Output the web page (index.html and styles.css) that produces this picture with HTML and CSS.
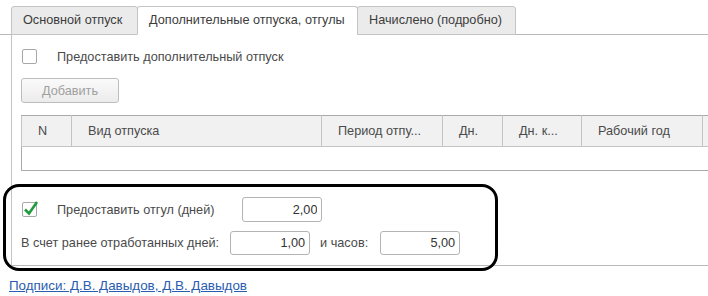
FILE: index.html
```html
<!DOCTYPE html>
<html lang="ru">
<head>
  <meta charset="UTF-8">
  <title>Отпуск</title>
  <link rel="stylesheet" href="styles.css">
</head>
<body>
  <div class="page">
    <!-- вкладки -->
    <div class="tabs">
      <div class="tab">Основной отпуск</div>
      <div class="tab active">Дополнительные отпуска, отгулы</div>
      <div class="tab">Начислено (подробно)</div>
    </div>

    <div class="panel">
      <label class="check-row">
        <span class="checkbox"></span>
        <span>Предоставить дополнительный отпуск</span>
      </label>

      <button class="btn" disabled>Добавить</button>

      <div class="grid">
        <table>
          <colgroup>
            <col style="width:50px">
            <col style="width:250px">
            <col style="width:121px">
            <col style="width:60px">
            <col style="width:79px">
            <col style="width:121px">
            <col style="width:80px">
          </colgroup>
          <thead>
            <tr>
              <th>N</th>
              <th>Вид отпуска</th>
              <th>Период отпу...</th>
              <th>Дн.</th>
              <th>Дн. к...</th>
              <th>Рабочий год</th>
              <th></th>
            </tr>
          </thead>
          <tbody>
            <tr><td colspan="7"></td></tr>
          </tbody>
        </table>
      </div>

      <div class="check-row days">
        <span class="checkbox checked">
          <svg width="18" height="18" viewBox="0 0 18 18">
            <path d="M3 9.5 L7 13.5 L15 2" fill="none" stroke="#1f9b3f" stroke-width="2.6"/>
          </svg>
        </span>
        <span>Предоставить отгул (дней)</span>
        <input class="num first" type="text" value="2,00" readonly>
      </div>

      <div class="field-row">
        <span>В счет ранее отработанных дней:</span>
        <input class="num" type="text" value="1,00" readonly>
        <span class="hours">и часов:</span>
        <input class="num" type="text" value="5,00" readonly>
      </div>
    </div>

    <a class="signs" href="#">Подписи: Д.В. Давыдов, Д.В. Давыдов</a>

    <!-- выделение рамкой -->
    <div class="mark"></div>
  </div>
</body>
</html>
```

FILE: styles.css
```css
/* базовые */
html, body {
  margin: 0;
  padding: 0;
  background: #ffffff;
  color: #4a4a4a;
  font-family: "Liberation Sans", Arial, sans-serif;
  font-size: 12.7px;
}
*, *::before, *::after {
  box-sizing: border-box;
}
.page {
  position: relative;
  width: 708px;
  height: 296px;
  overflow: hidden;
}
/* вкладки */
.tabs {
  display: flex;
  align-items: flex-end;
  padding: 6px 0 0 11px;
  height: 35px;
  border-bottom: 1px solid #b9b9b9;
}
.tab {
  height: 29px;
  margin-bottom: -1px;
  padding: 0 11px;
  line-height: 27px;
  white-space: nowrap;
  background: #ebebeb;
  border: 1px solid #c4c4c4;
  border-radius: 3px 3px 0 0;
  color: #3c3c3c;
}
.tab:first-child {
  width: 127px;
}
.tab.active {
  width: 221px;
  margin-left: -1px;
  background: #ffffff;
  border-bottom-color: #ffffff;
}
.tab:last-child {
  width: 159px;
  margin-left: -1px;
}
/* панель */
.panel {
  margin-left: 11px;
  height: 231px;
  border-left: 1px solid #c4c4c4;
  border-bottom: 1px solid #b9b9b9;
  padding: 14px 0 0 9px;
  display: flex;
  flex-direction: column;
  align-items: flex-start;
}
.check-row {
  display: flex;
  align-items: center;
  height: 15px;
  padding-left: 1px;
  white-space: nowrap;
}
.checkbox {
  position: relative;
  width: 15px;
  height: 15px;
  margin-right: 20px;
  border: 1px solid #a8a8a8;
  border-radius: 2px;
  background: #fff;
}
.checkbox svg {
  position: absolute;
  left: -1px;
  top: -3px;
}
.btn {
  margin-top: 14px;
  width: 98px;
  height: 25px;
  border: 1px solid #bdbdbd;
  border-radius: 3px;
  background: linear-gradient(#fafafa, #ececec);
  color: #a0a0a0;
  font-family: inherit;
  font-size: 12.7px;
}
/* таблица */
.grid {
  margin-top: 12px;
  width: 700px;
}
table {
  width: 761px;
  border-collapse: collapse;
  table-layout: fixed;
}
table th {
  height: 31px;
  padding: 0 0 0 16px;
  background: #f1f1f1;
  border: 1px solid #c4c4c4;
  border-top-color: #aaaaaa;
  font-weight: normal;
  text-align: left;
  white-space: nowrap;
  overflow: hidden;
  color: #4a4a4a;
}
table td {
  height: 24px;
  border-left: 1px solid #aaaaaa;
  border-bottom: 1px solid #aaaaaa;
}
/* отгулы */
.days {
  margin-top: 26px;
  height: 25px;
}
.num {
  width: 80px;
  height: 24px;
  padding: 0 4px;
  border: 1px solid #b4b4b4;
  border-radius: 3px;
  text-align: right;
  font-family: inherit;
  font-size: 12.7px;
  color: #333;
  outline: none;
}
.num.first {
  height: 25px;
  margin-left: 28px;
}
.field-row {
  display: flex;
  align-items: center;
  margin-top: 9px;
  height: 24px;
  white-space: nowrap;
}
.field-row .num {
  margin-left: 11px;
}
.hours {
  margin-left: 10px;
}
.field-row .hours + .num {
  margin-left: 12px;
}
.signs {
  display: inline-block;
  margin: 12px 0 0 9px;
  color: #2a5db0;
  font-size: 13.4px;
  text-decoration: underline;
}
.mark {
  position: absolute;
  left: 3px;
  top: 184px;
  width: 495px;
  height: 87px;
  border: 3px solid #000;
  border-radius: 16px;
  pointer-events: none;
}
```
